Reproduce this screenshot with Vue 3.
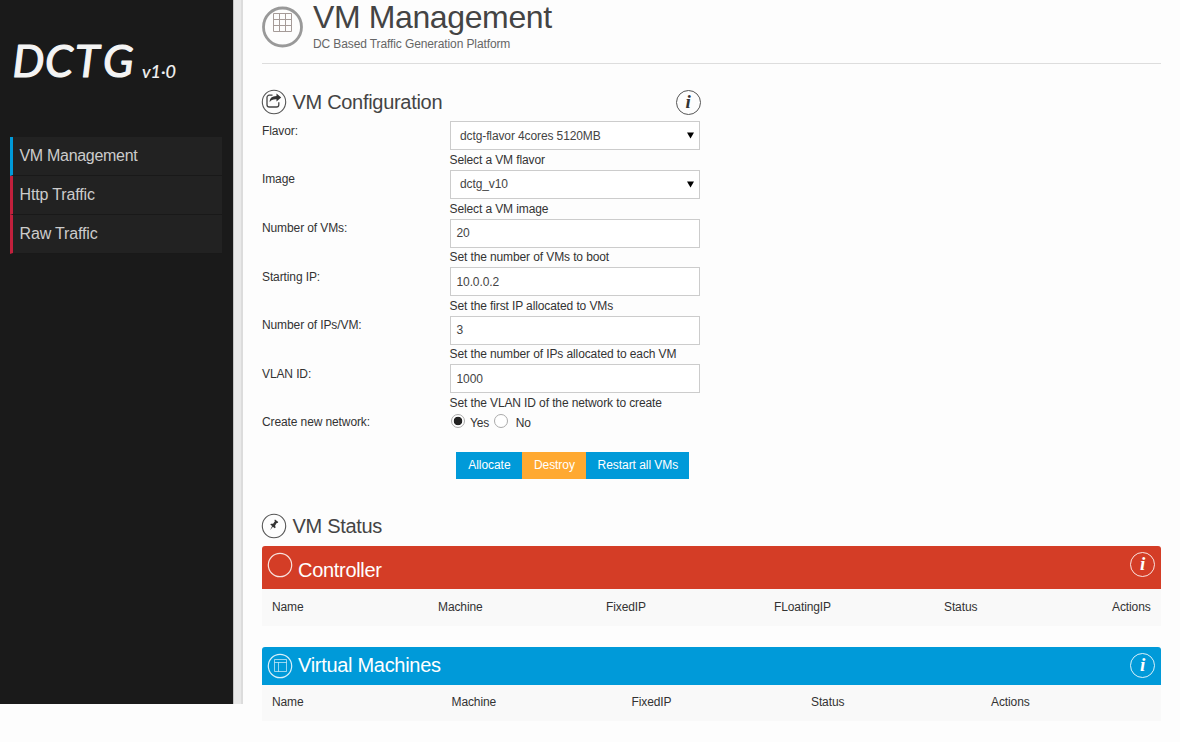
<script setup>
import { ref } from 'vue'

const menu = [
  { label: 'VM Management', active: true },
  { label: 'Http Traffic', active: false },
  { label: 'Raw Traffic', active: false },
]
const fields = [
  { label: 'Flavor:', value: 'dctg-flavor 4cores 5120MB', help: 'Select a VM flavor', select: true },
  { label: 'Image', value: 'dctg_v10', help: 'Select a VM image', select: true },
  { label: 'Number of VMs:', value: '20', help: 'Set the number of VMs to boot' },
  { label: 'Starting IP:', value: '10.0.0.2', help: 'Set the first IP allocated to VMs' },
  { label: 'Number of IPs/VM:', value: '3', help: 'Set the number of IPs allocated to each VM' },
  { label: 'VLAN ID:', value: '1000', help: 'Set the VLAN ID of the network to create' },
]
const createNetwork = ref(true)
const controllerColumns = ['Name', 'Machine', 'FixedIP', 'FLoatingIP', 'Status', 'Actions']
const machineColumns = ['Name', 'Machine', 'FixedIP', 'Status', 'Actions']
</script>

<template>
  <div class="page">
    <aside class="sidebar">
      <div class="panel">
        <svg class="logo" width="200" height="70" viewBox="0 0 200 70">
          <text class="brand" x="12.5 45 75 103" y="52">DCTG</text>
          <text class="version" x="142" y="53" textLength="34" lengthAdjust="spacingAndGlyphs">v1·0</text>
        </svg>
        <nav class="menu">
          <a v-for="m in menu" :key="m.label" :class="{ active: m.active }">{{ m.label }}</a>
        </nav>
      </div>
      <div class="edge"></div>
    </aside>

    <main class="content">
      <header class="page-head">
        <svg class="page-icon" width="42" height="42" viewBox="0 0 42 42" fill="none">
          <circle cx="20.5" cy="21" r="19" stroke="#999" stroke-width="2.8" />
          <path d="M11.5 7.5h18v18h-18zM17.5 7.5v18M23.5 7.5v18M11.5 13.5h18M11.5 19.5h18" stroke="#a59b98" />
        </svg>
        <div>
          <h1>VM Management</h1>
          <p>DC Based Traffic Generation Platform</p>
        </div>
      </header>

      <section class="config">
        <div class="section-head">
          <svg width="26" height="26" viewBox="0 0 26 26">
            <circle cx="13" cy="13" r="11.7" fill="none" stroke="#555" stroke-width="1.1" />
            <path d="M11.5 6.2H8.3a2.3 2.3 0 0 0-2.3 2.3v7.2a2.3 2.3 0 0 0 2.3 2.3h7.2a2.3 2.3 0 0 0 2.3-2.3v-2.4" fill="none" stroke="#444" stroke-width="1.3" />
            <path d="M15.5 4.6l4.7 4-4.7 4v-2.4c-3.6-.1-5.6.6-6.8 3C8.6 9 11 7 15.5 6.9z" fill="#333" />
          </svg>
          <h2>VM Configuration</h2>
          <span class="info">i</span>
        </div>

        <div v-for="f in fields" :key="f.label" class="row">
          <label>{{ f.label }}</label>
          <div class="control">
            <div class="box" :class="{ select: f.select }">
              <span>{{ f.value }}</span>
              <svg v-if="f.select" width="7" height="7" viewBox="0 0 7 7"><path d="M0 .5h7L3.5 6.5z" /></svg>
            </div>
            <div class="help">{{ f.help }}</div>
          </div>
        </div>
        <div class="row network">
          <label>Create new network:</label>
          <div class="radios">
            <i class="radio" :class="{ on: createNetwork }" @click="createNetwork = true"></i>
            <span class="yes">Yes</span>
            <i class="radio" :class="{ on: !createNetwork }" @click="createNetwork = false"></i>
            <span class="no">No</span>
          </div>
        </div>
        <div class="buttons">
          <button class="allocate">Allocate</button>
          <button class="destroy">Destroy</button>
          <button class="restart">Restart all VMs</button>
        </div>
      </section>

      <section class="status">
        <div class="section-head">
          <svg width="26" height="26" viewBox="0 0 26 26">
            <circle cx="13" cy="13" r="11.7" fill="none" stroke="#555" stroke-width="1.1" />
            <path d="M14 6.4l3.3 2.7-.7.9-.9-.1-1.6 2.5.5 2.2-.8.7-1.9-1.5-2.7 3.2 1.9-3.9-1.8-1.5.7-.8 2.1-.1 1.8-2.5-.5-1z" fill="#333" />
          </svg>
          <h2>VM Status</h2>
        </div>

        <div class="bar red">
          <svg width="26" height="26" viewBox="0 0 26 26"><circle cx="13" cy="13" r="11.7" fill="none" stroke="#fff" stroke-opacity=".85" stroke-width="1.2" /></svg>
          <h2>Controller</h2>
          <span class="info light">i</span>
        </div>
        <div class="columns controller">
          <span v-for="c in controllerColumns" :key="c">{{ c }}</span>
        </div>

        <div class="bar blue">
          <svg width="26" height="26" viewBox="0 0 26 26" fill="none" stroke="#fff">
            <circle cx="13" cy="13" r="11.7" stroke-opacity=".85" stroke-width="1.2" />
            <path d="M7.5 6.5h12v12h-12zM7.5 9.5h12M11.5 9.5v9" stroke-opacity=".6" />
          </svg>
          <h2>Virtual Machines</h2>
          <span class="info light">i</span>
        </div>
        <div class="columns machines">
          <span v-for="c in machineColumns" :key="c">{{ c }}</span>
        </div>
      </section>
    </main>
  </div>
</template>

<style>
body { background: #fdfdfd; overflow: hidden; }
</style>

<style scoped>
* { box-sizing: border-box; }
.page { display: flex; width: 1180px; height: 742px; overflow: hidden; font: 12px/20px "Liberation Sans", Arial, sans-serif; letter-spacing: -.11px; color: #333; }
.sidebar { display: flex; flex: none; width: 243px; height: 704px; }
.panel { width: 233px; background: #1a1a1a; padding-top: 25px; }
.edge { width: 10px; background: linear-gradient(90deg, #c4c4c4 0 1px, #e9e9e9 1px 8px, #dcdcdc 8px); }
.logo { display: block; overflow: visible; letter-spacing: 0; }
.logo text { fill: #f4f4f4; stroke: #f4f4f4; stroke-linejoin: round; font-family: Lato, sans-serif; font-style: italic; }
.brand { font-size: 45px; font-weight: 400; stroke-width: 1.2px; }
.version { font-size: 18px; font-weight: 400; stroke-width: .2px; }
.menu { margin: 42px 11px 0 10px; }
.menu a { display: block; height: 39px; padding-left: 6.5px; border-left: 3px solid #c2203c; border-bottom: 1px solid #191919; background: #222; color: #ccc; font-size: 16px; line-height: 38px; letter-spacing: -.15px; }
.menu a.active { border-left-color: #009ad9; letter-spacing: -.3px; }
.content { width: 898.5px; margin-left: 19px; }
h1, h2, p { margin: 0; font-weight: 400; }
.page-head { display: flex; height: 64px; border-bottom: 1px solid #ddd; }
.page-icon { margin: 6px 9px 0 0; flex: none; }
.page-head h1 { font-size: 32px; line-height: 34px; color: #444; letter-spacing: -.38px; }
.page-head p { color: #666; line-height: 20px; }
.section-head { display: flex; align-items: center; height: 26px; }
.section-head svg { margin: 0 .5px 0 -1px; }
h2 { margin-left: 5px; font-size: 20px; line-height: 26px; letter-spacing: -.3px; color: #444; }
.info { width: 25px; height: 25px; margin-left: auto; border: 1px solid #555; border-radius: 50%; font: italic bold 19px/21px "Liberation Serif", serif; text-align: center; color: #333; }
.info.light { border-color: rgba(255, 255, 255, .85); color: #fff; }
.config { width: 438px; margin-top: 25px; }
.config .section-head { height: 32.4px; padding-bottom: 6px; }
.config .info { margin-right: -.5px; }
.row { display: flex; height: 48.6px; }
.row label { width: 187.5px; margin-top: -.5px; }
.control { width: 250.5px; }
.box { display: flex; align-items: center; justify-content: space-between; height: 29px; padding: 0 6px; border: 1px solid #ccc; background: #fff; color: #444; }
.box.select { padding: 0 5px 0 9.5px; }
.box svg { fill: #000; }
.help { padding-top: .6px; line-height: 19.6px; }
.row.network { height: 38.6px; }
.radios { display: flex; align-items: center; height: 19.4px; }
.radio { width: 14px; height: 14px; margin: -4px 0 0 1.5px; border: 1px solid #aaa; border-radius: 50%; background: #fff; }
.radio.on { background: radial-gradient(circle, #222 0 4px, #fff 4.6px); }
.yes { margin: 0 3px 0 5px; }
.no { margin-left: 8px; }
.buttons { display: flex; margin-left: 194.4px; }
button { height: 27px; padding: 0; border: 0; color: #fff; background: #009ad9; font: inherit; letter-spacing: -.05px; }
.allocate { width: 66px; }
.destroy { width: 64px; background: #ffa931; }
.restart { width: 103px; }
.status { margin-top: 34px; }
.bar { display: flex; align-items: flex-start; height: 43.5px; padding: 6px 5.5px 0 5px; border-radius: 3px 3px 0 0; }
.bar h2 { color: #fff; }
.bar.red { margin-top: 7px; background: #d43d26; }
.bar.red h2 { padding-top: 5px; }
.bar.blue { height: 38px; margin-top: 21px; background: #009ad9; }
.bar.blue h2 { line-height: 25px; }
.columns { display: grid; height: 36.5px; background: #f9f9f9; line-height: 35.4px; }
.controller { grid-template-columns: 166px 168px 168px 170px 168px auto; padding-left: 10px; line-height: 36.5px; }
.machines { grid-template-columns: 179.5px 180px 179.5px 180px auto; padding-left: 10px; }
</style>
